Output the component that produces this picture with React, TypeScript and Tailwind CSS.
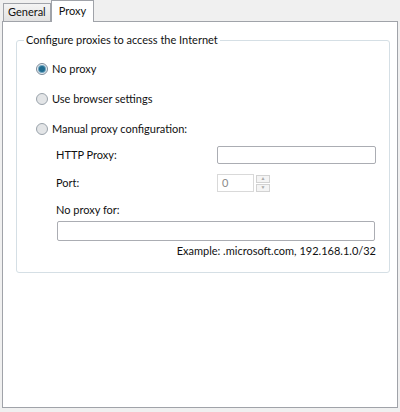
import React from "react";

const font = { fontFamily: 'Lato, "Liberation Sans", Arial, sans-serif' };

function Radio({ checked, label }: { checked?: boolean; label: string }) {
  return (
    <div className="flex h-[30px] items-center gap-[4px] pl-[13px]">
      <span
        className={
          "flex h-[12px] w-[12px] items-center justify-center rounded-full border " +
          (checked ? "border-[#7b8a99] bg-[#e8eef3]" : "border-[#9aa3ab] bg-[#e3e5e7]")
        }
      >
        {checked && <span className="h-[6px] w-[6px] rounded-full bg-[#1f6b8f] shadow-[0_0_0_1px_#6ea3bd]" />}
      </span>
      <span>{label}</span>
    </div>
  );
}

export default function App() {
  return (
    <div className="h-[412px] w-[400px] bg-[#f0f0f0] text-[11px] text-[#111]" style={font}>
      <div className="flex h-[21px] items-end pl-[3px]">
        <div className="flex h-[18px] items-center border border-b-0 border-[#a0a3a9] bg-gradient-to-b from-[#f4f4f4] to-[#e2e2e2] px-[4px]">
          General
        </div>
        <div className="relative -mb-px flex h-[22px] items-start border border-b-0 border-[#a0a3a9] bg-white px-[7px] pt-[2px]">
          Proxy
        </div>
      </div>
      <div className="mx-[2px] h-[387px] border border-[#a0a3a9] bg-white px-[13px] pt-[11px] pr-[7px]">
        <fieldset className="h-[240px] rounded-[3px] border border-[#d5dfe5] pl-[6px] pr-[13px]">
          <legend className="ml-[1px] px-[2px] leading-[14px]">Configure proxies to access the Internet</legend>
          <div className="pt-[7px]">
            <Radio checked label="No proxy" />
            <Radio label="Use browser settings" />
            <Radio label="Manual proxy configuration:" />
            <div className="pl-[33px]">
              <div className="flex h-[22px] items-center justify-between">
                <span>HTTP Proxy:</span>
                <div className="h-[18px] w-[159px] rounded-[2px] border border-[#abadb3] bg-white" />
              </div>
              <div className="flex h-[34px] items-center justify-between">
                <span>Port:</span>
                <div className="flex w-[159px] items-center gap-[2px]">
                  <div className="flex h-[18px] w-[37px] items-center border border-[#d9d9d9] bg-white pl-[4px] text-[#8a8a8a]">
                    0
                  </div>
                  <div className="flex flex-col gap-px">
                    <div className="flex h-[8px] w-[14px] items-center justify-center border border-[#d2d2d2] bg-[#f4f4f4] text-[5px] text-[#aaa]">▲</div>
                    <div className="flex h-[8px] w-[14px] items-center justify-center border border-[#d2d2d2] bg-[#f4f4f4] text-[5px] text-[#aaa]">▼</div>
                  </div>
                </div>
              </div>
              <div className="flex h-[21px] items-center">No proxy for:</div>
              <div className="ml-px h-[20px] w-[318px] rounded-[2px] border border-[#abadb3] bg-white" />
              <div className="mt-[3px] text-right leading-[14px]">Example: .microsoft.com, 192.168.1.0/32</div>
            </div>
          </div>
        </fieldset>
      </div>
    </div>
  );
}
